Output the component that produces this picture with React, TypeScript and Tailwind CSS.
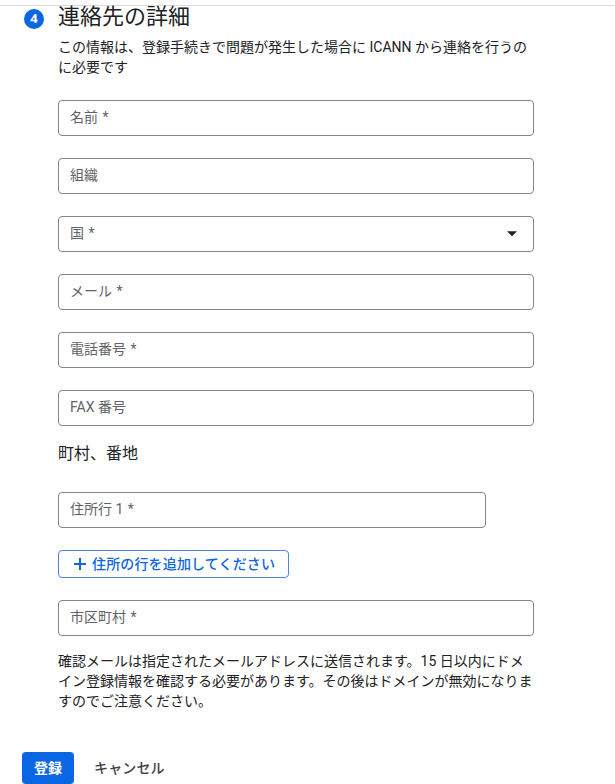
import { useState } from "react";

interface FieldProps {
  label: string;
  required?: boolean;
  wide?: boolean;
  select?: boolean;
}

function Field({ label, required, wide = true, select }: FieldProps) {
  const [value] = useState("");

  return (
    <div
      className={`flex h-9 items-center justify-between rounded-[4px] border border-[#80868b] px-[11px] pr-4 text-sm text-[#5f6368] ${
        wide ? "w-[476px]" : "w-[428px]"
      }`}
    >
      <span className="pb-0.5 leading-5">
        {value || label}
        {required && <span className="ml-px"> *</span>}
      </span>
      {select && (
        <svg width="10" height="6" viewBox="0 0 10 6" className="fill-[#202124]">
          <path d="M0 .3h10L5 5.3z" />
        </svg>
      )}
    </div>
  );
}

const CONTACT_FIELDS = [
  { label: "名前", required: true },
  { label: "組織" },
  { label: "国", required: true, select: true },
  { label: "メール", required: true },
  { label: "電話番号", required: true },
  { label: "FAX 番号" },
];

export default function App() {
  return (
    <div className="h-[784px] w-[615px] overflow-hidden bg-white pt-[5px] font-[Roboto,'Noto_Sans_CJK_JP',sans-serif] text-[#202124]">
      <div className="border-t border-[#dadce0]">
        <div className="flex items-start">
          <div className="ml-6 mt-[3px] flex size-5 shrink-0 items-center justify-center rounded-full bg-[#0b66e4] font-['Open_Sans',sans-serif] text-[13px] font-bold text-white">
            4
          </div>
          <div className="ml-[14px] w-[476px]">
            <h2 className="text-[22px] leading-[22px]">連絡先の詳細</h2>
            <p className="mt-[9px] text-sm leading-5">
              この情報は、登録手続きで問題が発生した場合に ICANN から連絡を行うの
              <br />
              に必要です
            </p>

            <div className="mt-[23px] flex flex-col gap-[22px]">
              {CONTACT_FIELDS.map((f) => (
                <Field key={f.label} label={f.label} required={f.required} select={f.select} />
              ))}
            </div>

            <h3 className="mt-4 text-base leading-6">町村、番地</h3>

            <div className="mt-[26px] flex flex-col items-start gap-[22px]">
              <Field label="住所行 1" required wide={false} />
              <button className="flex h-7 w-[231px] items-center rounded-[4px] border border-[#4a83d8] pl-[15px] text-sm font-medium tracking-[0.15px] text-[#0b66e4]">
                <svg width="12" height="12" viewBox="0 0 12 12" className="mr-1.5 fill-current">
                  <path d="M5 0h2v5h5v2H7v5H5V7H0V5h5z" />
                </svg>
                住所の行を追加してください
              </button>
              <Field label="市区町村" required />
            </div>

            <p className="mt-[15px] text-sm leading-5 whitespace-nowrap">
              確認メールは指定されたメールアドレスに送信されます。15 日以内にドメ
              <br />
              イン登録情報を確認する必要があります。その後はドメインが無効になりま
              <br />
              すのでご注意ください。
            </p>
          </div>
        </div>

        {/* Actions */}
        <div className="mt-[41px] ml-[22px] flex items-center text-sm">
          <button className="h-8 w-[52px] rounded-[4px] bg-[#0b66e4] font-bold text-white">登録</button>
          <button className="ml-5 h-8 font-medium tracking-[0.15px] text-[#3c4043]">キャンセル</button>
        </div>
      </div>
    </div>
  );
}
